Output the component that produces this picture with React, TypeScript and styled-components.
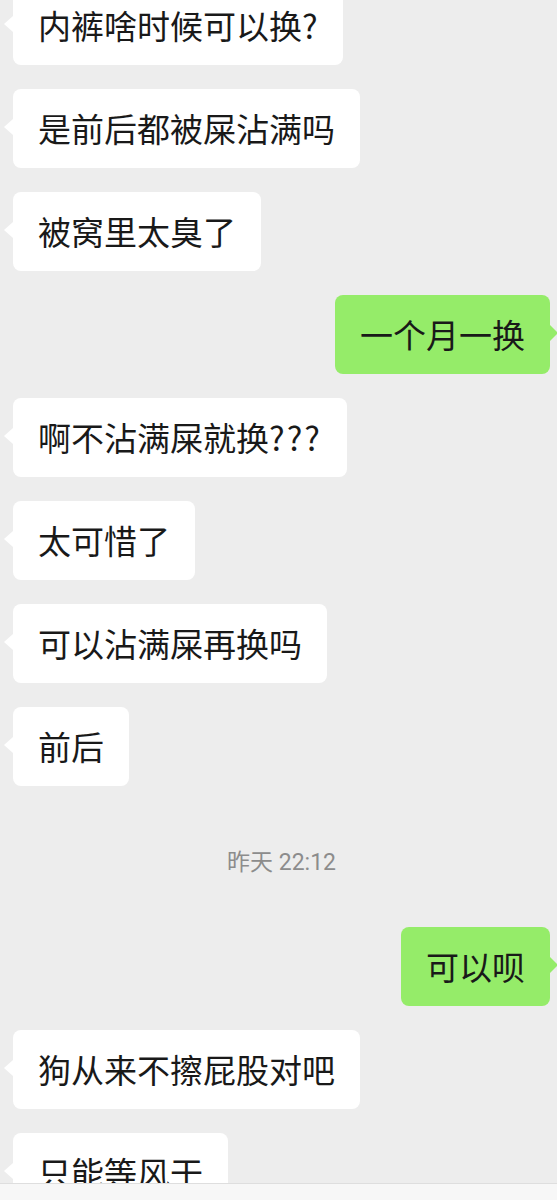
import React from 'react'
import styled, { createGlobalStyle } from 'styled-components'

const GlobalStyle = createGlobalStyle`
  html, body {
    margin: 0;
    padding: 0;
    background: #ededed;
  }
  body {
    font-family: 'Noto Sans CJK SC', 'Noto Sans', 'Liberation Sans', sans-serif;
    -webkit-font-smoothing: antialiased;
  }
`

const Page = styled.div`
  width: 557px;
  height: 1200px;
  display: flex;
  flex-direction: column;
  overflow: hidden;
  background: #ededed;
`

const ChatArea = styled.div`
  flex: 1;
  overflow: hidden;
  display: flex;
  flex-direction: column;
  gap: 24px;
  padding: 0 7px 0 13px;
  box-sizing: border-box;
  & > :first-child {
    margin-top: -14px;
  }
`

const Row = styled.div<{ mine?: boolean }>`
  display: flex;
  justify-content: ${({ mine }) => (mine ? 'flex-end' : 'flex-start')};
  flex-shrink: 0;
`

const Bubble = styled.div<{ mine?: boolean }>`
  position: relative;
  max-width: 420px;
  padding: 16px 25px;
  border-radius: 8px;
  background: ${({ mine }) => (mine ? '#95ec69' : '#ffffff')};
  color: #191919;
  font-size: 33px;
  line-height: 47px;
  white-space: nowrap;

  &::before {
    content: '';
    position: absolute;
    top: 30px;
    ${({ mine }) => (mine ? 'right: -8px;' : 'left: -9px;')}
    width: 0;
    height: 0;
    border-top: 8px solid transparent;
    border-bottom: 8px solid transparent;
    ${({ mine }) =>
      mine
        ? 'border-left: 8px solid #95ec69;'
        : 'border-right: 9px solid #ffffff;'}
  }
`

const Punct = styled.span`
  letter-spacing: 2px;
`

const Stamp = styled.div`
  flex-shrink: 0;
  padding: 34px 0 24px;
  text-align: center;
  font-size: 23px;
  line-height: 32px;
  color: #8c8c8c;
  font-family: Roboto, 'Noto Sans CJK SC', sans-serif;
  & > span {
    font-family: 'Noto Sans CJK SC', sans-serif;
  }
`

const InputBar = styled.div`
  height: 16px;
  flex-shrink: 0;
  background: #f7f7f7;
  border-top: 1px solid #dedede;
`

type Item =
  | { kind: 'msg'; text: string; tail?: string; mine?: boolean }
  | { kind: 'time'; day: string; time: string }

const items: Item[] = [
  { kind: 'msg', text: '内裤啥时候可以换?' },
  { kind: 'msg', text: '是前后都被屎沾满吗' },
  { kind: 'msg', text: '被窝里太臭了' },
  { kind: 'msg', text: '一个月一换', mine: true },
  { kind: 'msg', text: '啊不沾满屎就换', tail: '???' },
  { kind: 'msg', text: '太可惜了' },
  { kind: 'msg', text: '可以沾满屎再换吗' },
  { kind: 'msg', text: '前后' },
  { kind: 'time', day: '昨天', time: '22:12' },
  { kind: 'msg', text: '可以呗', mine: true },
  { kind: 'msg', text: '狗从来不擦屁股对吧' },
  { kind: 'msg', text: '只能等风干' },
]

export default function App() {
  return (
    <>
      <GlobalStyle />
      <Page>
        <ChatArea>
          {items.map((item, i) =>
            item.kind === 'time' ? (
              <Stamp key={i}>
                <span>{item.day}</span> {item.time}
              </Stamp>
            ) : (
              <Row key={i} mine={item.mine}>
                <Bubble mine={item.mine}>
                  {item.text}
                  {item.tail && <Punct>{item.tail}</Punct>}
                </Bubble>
              </Row>
            )
          )}
        </ChatArea>
        <InputBar />
      </Page>
    </>
  )
}
